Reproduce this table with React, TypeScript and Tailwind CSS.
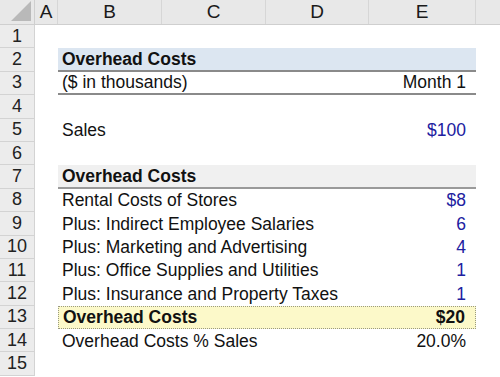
import React from "react";

type Row = {
  n: number;
  label?: string;
  value?: string;
  bold?: boolean;
  blue?: boolean;
  kind?: "blue" | "gray" | "yellow" | "line";
};

const rows: Row[] = [
  { n: 1 },
  { n: 2, label: "Overhead Costs", bold: true, kind: "blue" },
  { n: 3, label: "($ in thousands)", value: "Month 1", kind: "line" },
  { n: 4 },
  { n: 5, label: "Sales", value: "$100", blue: true },
  { n: 6 },
  { n: 7, label: "Overhead Costs", bold: true, kind: "gray" },
  { n: 8, label: "Rental Costs of Stores", value: "$8", blue: true },
  { n: 9, label: "Plus: Indirect Employee Salaries", value: "6", blue: true },
  { n: 10, label: "Plus: Marketing and Advertising", value: "4", blue: true },
  { n: 11, label: "Plus: Office Supplies and Utilities", value: "1", blue: true },
  { n: 12, label: "Plus: Insurance and Property Taxes", value: "1", blue: true },
  { n: 13, label: "Overhead Costs", value: "$20", bold: true, kind: "yellow" },
  { n: 14, label: "Overhead Costs % Sales", value: "20.0%" },
  { n: 15 },
];

export default function App() {
  const font = { fontFamily: '"Liberation Sans", Arial, sans-serif' };
  return (
    <div className="w-[500px] h-[377px] overflow-hidden bg-white text-[#111]" style={font}>
      {/* column header */}
      <div className="flex h-[25px] bg-[#e8e8e8] border-b border-[#cfcfcf] text-[19px] text-[#1a1a1a]">
        <div className="w-[35px] shrink-0 relative border-r border-[#cfcfcf]">
          <div
            className="absolute right-[3px] bottom-[3px] w-0 h-0"
            style={{ borderLeft: "20px solid transparent", borderBottom: "20px solid #b9b9b9" }}
          />
        </div>
        <div className="w-[23px] shrink-0 flex items-center justify-center border-r border-[#d6d6d6]">A</div>
        <div className="w-[104px] shrink-0 flex items-center justify-center border-r border-[#d6d6d6]">B</div>
        <div className="w-[104px] shrink-0 flex items-center justify-center border-r border-[#d6d6d6]">C</div>
        <div className="w-[103px] shrink-0 flex items-center justify-center border-r border-[#d6d6d6]">D</div>
        <div className="w-[107px] shrink-0 flex items-center justify-center border-r border-[#d6d6d6]">E</div>
        <div className="flex-1" />
      </div>
      {rows.map((r) => {
        let area = "";
        if (r.kind === "blue") area = "bg-[#dce6f1] border-b-2 border-[#8a8a8a]";
        else if (r.kind === "gray") area = "bg-[#f0f0f0] border-b-2 border-[#9a9a9a]";
        else if (r.kind === "line") area = "border-b-2 border-[#8a8a8a]";
        else if (r.kind === "yellow") area = "bg-[#fcf9c9] border border-dotted border-[#9a9a80]";
        return (
          <div key={r.n} className="flex h-[23.4px]">
            <div className="w-[35px] shrink-0 bg-[#ececec] border-r border-b border-[#d3d3d3] flex items-center justify-center text-[18px] text-[#222]">
              {r.n}
            </div>
            <div className="w-[23px] shrink-0" />
            <div
              className={`w-[418px] shrink-0 flex items-center justify-between pl-[4px] pr-[10px] text-[17.5px] ${area} ${
                r.bold ? "font-bold" : ""
              }`}
            >
              <span>{r.label}</span>
              {r.value && <span className={r.blue ? "text-[#2020a0]" : ""}>{r.value}</span>}
            </div>
            <div className="flex-1" />
          </div>
        );
      })}
    </div>
  );
}
